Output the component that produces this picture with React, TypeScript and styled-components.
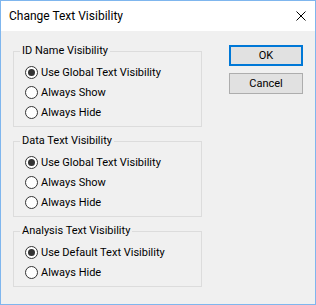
import React from "react";
import styled, { createGlobalStyle } from "styled-components";

const Global = createGlobalStyle`
  html, body { margin: 0; padding: 0; background: #ffffff; }
  * { box-sizing: border-box; }
`;

const FONT = `Roboto, "Noto Sans", sans-serif`;

const Window = styled.div`
  width: 316px;
  height: 305px;
  border: 1px solid #7fb6ee;
  display: flex;
  flex-direction: column;
  font-family: ${FONT};
  font-size: 11px;
  color: #000;
  background: #f0f0f0;
`;

const TitleBar = styled.div`
  height: 30px;
  flex: none;
  background: #ffffff;
  display: flex;
  align-items: center;
  justify-content: space-between;
  padding: 0 9px 0 8px;
`;

const Title = styled.span`
  font-size: 12px;
  line-height: 16px;
`;

const Body = styled.div`
  flex: 1;
  display: flex;
  align-items: flex-start;
  padding: 12px 0 0 12px;
`;

const Groups = styled.div`
  width: 189px;
  display: flex;
  flex-direction: column;
  gap: 6px;
`;

const Group = styled.fieldset`
  margin: 0;
  padding: 3px 0 4px 11px;
  border: 1px solid #dcdcdc;
  min-width: 0;
`;

const Legend = styled.legend`
  padding: 0 2px;
  margin-left: -5px;
  line-height: 16px;
  height: 16px;
`;

const Row = styled.label`
  height: 20px;
  display: flex;
  align-items: center;
  gap: 3px;
  white-space: nowrap;
`;

const Radio = styled.span<{ $checked?: boolean }>`
  width: 13px;
  height: 13px;
  border-radius: 50%;
  border: 1px solid #333333;
  background: #ffffff;
  display: flex;
  align-items: center;
  justify-content: center;
  flex: none;
  &::after {
    content: "";
    width: 7px;
    height: 7px;
    border-radius: 50%;
    background: #333333;
    display: ${(p) => (p.$checked ? "block" : "none")};
  }
`;

const Buttons = styled.div`
  margin: 2px 0 0 27px;
  display: flex;
  flex-direction: column;
  gap: 7px;
`;

const Button = styled.button<{ $default?: boolean }>`
  width: 74px;
  height: 21px;
  padding: 0;
  font-family: ${FONT};
  font-size: 11px;
  color: #000;
  background: #e1e1e1;
  border: ${(p) => (p.$default ? "2px solid #0078d7" : "1px solid #adadad")};
`;

type Option = { label: string; checked?: boolean };

const groups: { title: string; options: Option[] }[] = [
  {
    title: "ID Name Visibility",
    options: [
      { label: "Use Global Text Visibility", checked: true },
      { label: "Always Show" },
      { label: "Always Hide" },
    ],
  },
  {
    title: "Data Text Visibility",
    options: [
      { label: "Use Global Text Visibility", checked: true },
      { label: "Always Show" },
      { label: "Always Hide" },
    ],
  },
  {
    title: "Analysis Text Visibility",
    options: [
      { label: "Use Default Text Visibility", checked: true },
      { label: "Always Hide" },
    ],
  },
];

export default function App() {
  return (
    <>
      <Global />
      <Window>
        <TitleBar>
          <Title>Change Text Visibility</Title>
          <svg width="10" height="10" viewBox="0 0 10 10">
            <path d="M0.5 0.5 L9.5 9.5 M9.5 0.5 L0.5 9.5" stroke="#000" strokeWidth="1" fill="none" />
          </svg>
        </TitleBar>
        <Body>
          <Groups>
            {groups.map((g) => (
              <Group key={g.title}>
                <Legend>{g.title}</Legend>
                {g.options.map((o) => (
                  <Row key={o.label}>
                    <Radio $checked={o.checked} />
                    {o.label}
                  </Row>
                ))}
              </Group>
            ))}
          </Groups>
          <Buttons>
            <Button $default>OK</Button>
            <Button>Cancel</Button>
          </Buttons>
        </Body>
      </Window>
    </>
  );
}
